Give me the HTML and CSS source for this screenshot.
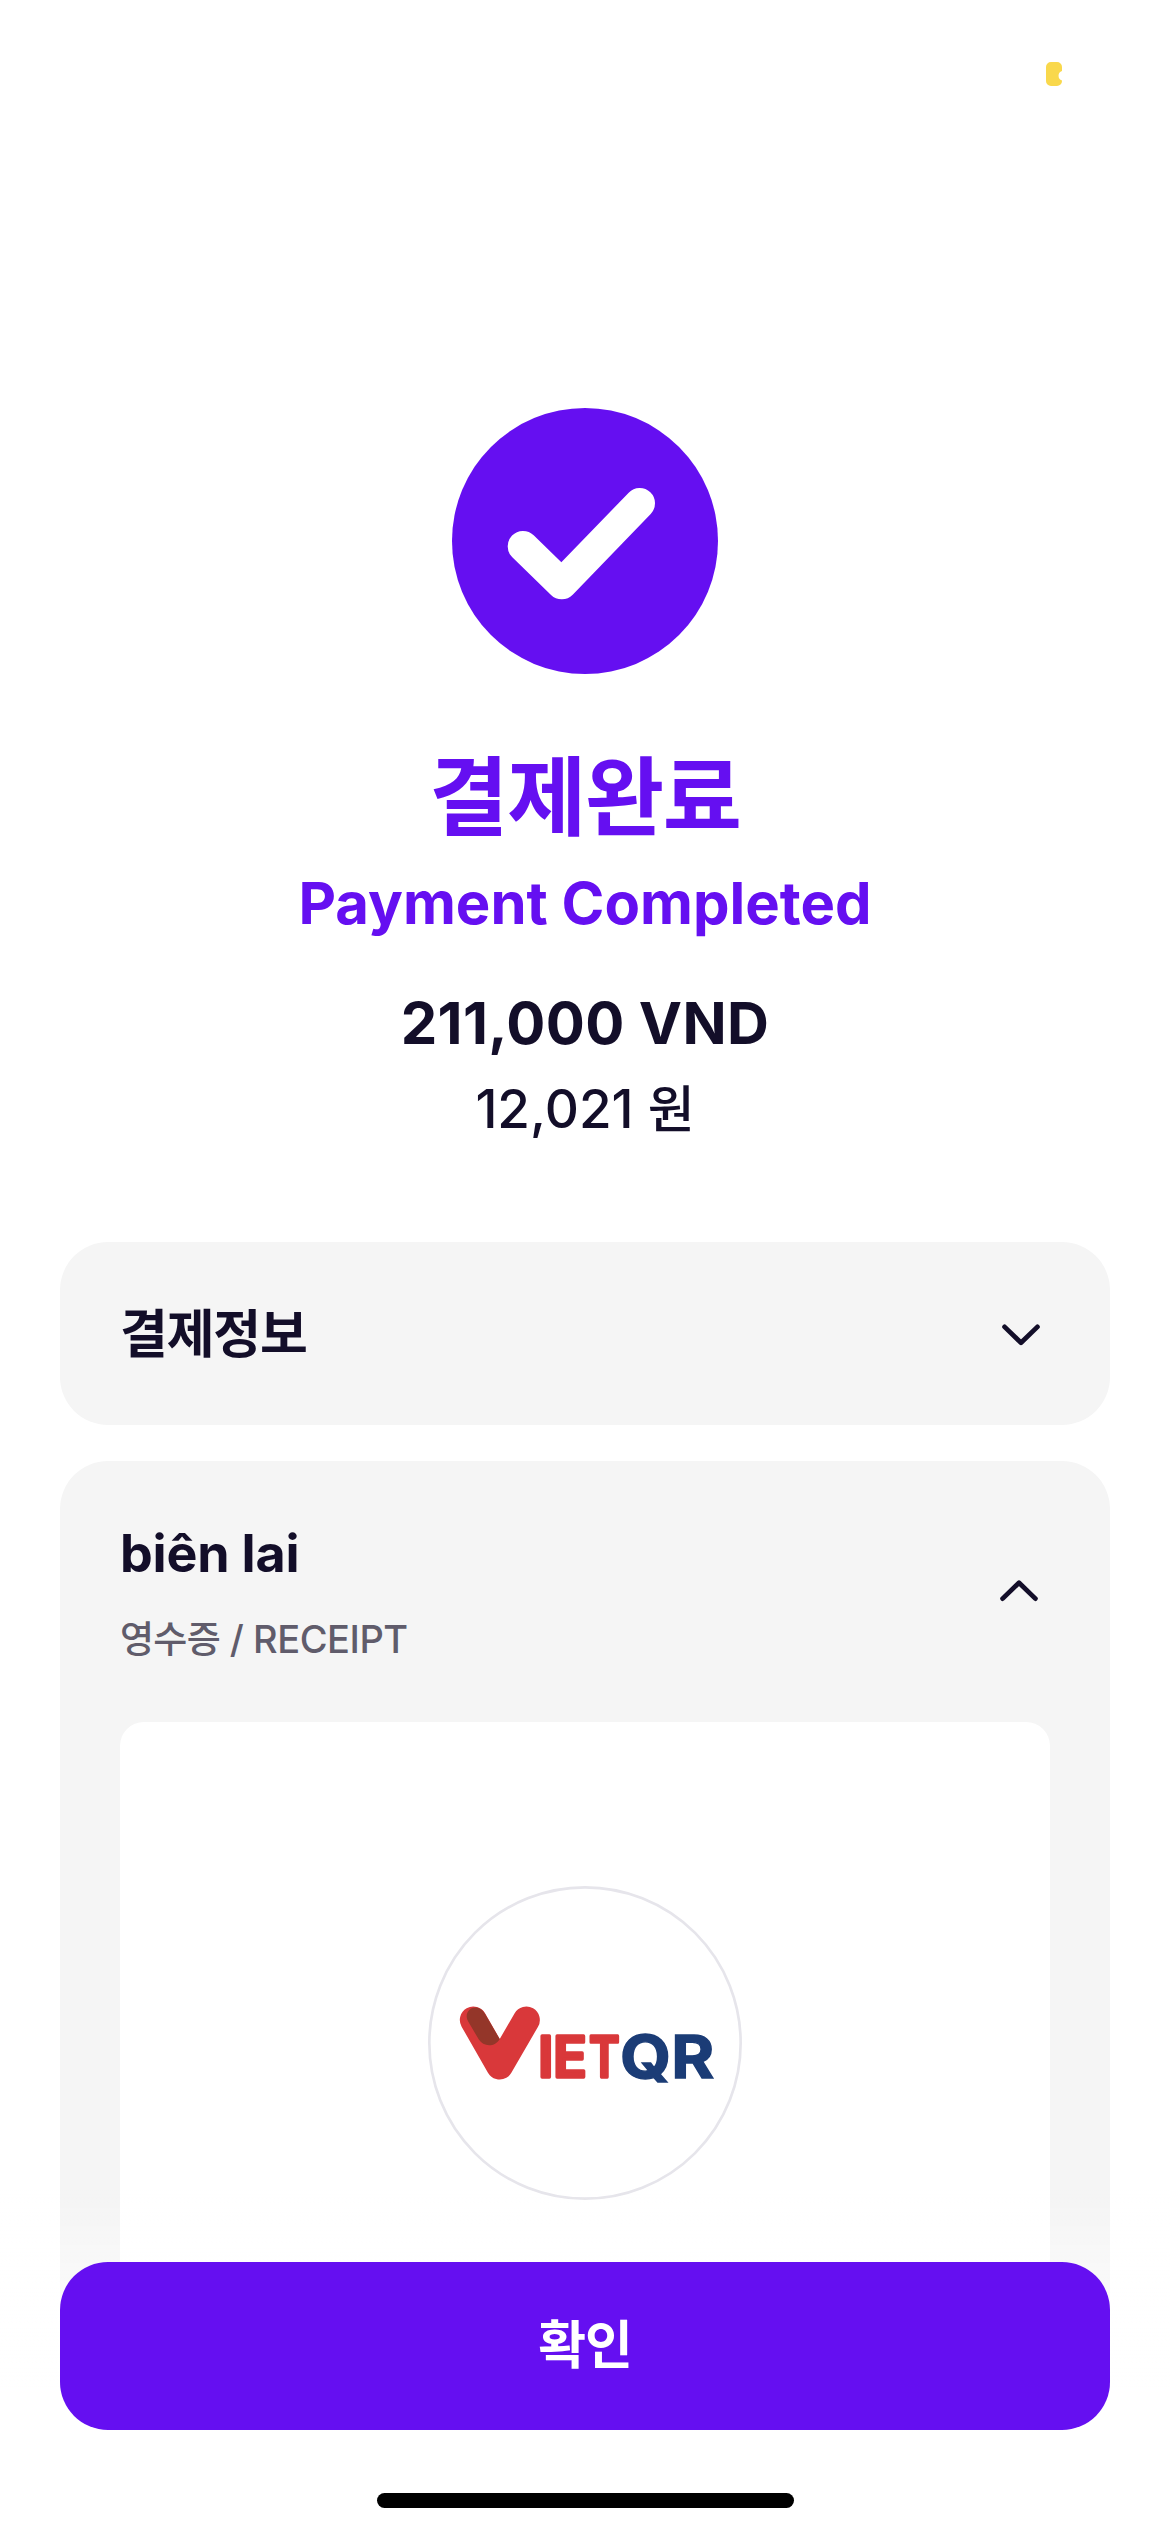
FILE: index.html
```html
<!DOCTYPE html>
<html lang="ko">
<head>
<meta charset="utf-8">
<title>결제완료</title>
<link rel="stylesheet" href="styles.css">
</head>
<body>
<header class="status">
  <svg class="battery" width="16" height="24" viewBox="0 0 16 24"><path fill="#f9d84c" d="M5 0H11A5 5 0 0 1 16 5V9A5 5 0 0 0 16 18.5V19A5 5 0 0 1 11 24H5A5 5 0 0 1 0 19V5A5 5 0 0 1 5 0Z"/></svg>
</header>
<main class="page">
  <section class="result">
    <svg class="check" width="266" height="266" viewBox="0 0 266 266">
      <circle cx="133" cy="133" r="133" fill="#650ff1"/>
      <path d="M71 138.3L109.7 176L187.7 95.3" fill="none" stroke="#fff" stroke-width="30.6" stroke-linecap="round" stroke-linejoin="round"/>
    </svg>
    <h1 class="title">결제완료</h1>
    <p class="subtitle">Payment Completed</p>
    <p class="amount">211,000 VND</p>
    <p class="converted">12,021 <span class="won">원</span></p>
  </section>
  <section class="card card-info">
    <h2 class="card-title-ko">결제정보</h2>
    <svg class="chevron" width="58" height="40" viewBox="0 0 58 40"><path d="M12.6 12.9L29 28.8L45.4 12.9"/></svg>
  </section>
  <section class="card card-receipt">
    <div class="card-head">
      <div>
        <h2 class="card-title">biên lai</h2>
        <p class="card-sub"><span class="sub-ko">영수증</span> / RECEIPT</p>
      </div>
      <svg class="chevron" width="58" height="40" viewBox="0 0 58 40"><path d="M10.6 25.6L27 9.7L43.4 25.6"/></svg>
    </div>
    <div class="receipt">
      <svg class="logo" width="314" height="314" viewBox="24 46 942 942">
        <circle cx="495" cy="517" r="467" fill="#fff" stroke="#e6e5eb" stroke-width="8"/>
        <path d="M160 448L239 586L319 448" fill="none" stroke="#d9383a" stroke-width="81" stroke-linecap="round" stroke-linejoin="round"/>
        <path d="M140 438C140 408 178 400 194 428L239 505C226 530 190 530 176 506L145 453Q140 445 140 438Z" fill="#943629"/>
        <text class="logo-iet" x="354 399" y="619">IE</text>
        <text class="logo-iet" x="507" y="619" textLength="92" lengthAdjust="spacingAndGlyphs">T</text>
        <text class="logo-qr" x="600" y="622" textLength="153" lengthAdjust="spacingAndGlyphs">Q</text>
        <text class="logo-qr" x="754" y="622" textLength="129" lengthAdjust="spacingAndGlyphs">R</text>
      </svg>
    </div>
  </section>
</main>
<footer class="footer">
  <button class="confirm">확인</button>
  <div class="home-bar"></div>
</footer>
</body>
</html>
```
FILE: styles.css
```css
* { box-sizing: border-box; margin: 0; padding: 0; }
body {
  height: 2532px;
  background: #fff;
  color: #130e29;
  font-family: "Inter", "Noto Sans CJK KR", sans-serif;
}
.status { height: 408px; padding: 62px 108px 0 0; display: flex; justify-content: flex-end; }
.page { padding: 0 60px; display: flex; flex-direction: column; }
.result { display: flex; flex-direction: column; align-items: center; margin-bottom: 101px; white-space: nowrap; }
.title { margin-top: 70px; font-size: 86px; line-height: 108px; font-weight: 700; letter-spacing: -1.3px; color: #650ff1; }
.subtitle { margin-top: 15px; font-size: 58px; line-height: 72px; font-weight: 700; color: #650ff1; }
.amount { margin-top: 48px; font-size: 58px; line-height: 72px; font-weight: 700; letter-spacing: 0.35px; }
.converted { margin-top: 18px; font-size: 53px; line-height: 64px; font-weight: 500; }
.won { font-size: 51px; line-height: 1; }
.card { background: #f5f5f5; border-radius: 48px; padding: 0 60px; }
.card-info { height: 183px; display: flex; align-items: center; justify-content: space-between; margin-bottom: 36px; }
.card-title-ko { padding-top: 2px; font-size: 52px; line-height: 64px; font-weight: 700; letter-spacing: -1.2px; }
.card-receipt { padding-top: 61px; }
.card-head { display: flex; align-items: center; justify-content: space-between; }
.card-title { font-size: 52px; line-height: 64px; font-weight: 700; letter-spacing: -0.2px; }
.card-sub { margin-top: 29px; font-size: 38px; line-height: 48px; font-weight: 450; letter-spacing: -0.45px; color: #605c6b; }
.sub-ko { font-size: 37px; line-height: 1; font-weight: 500; letter-spacing: -0.7px; }
.chevron path { fill: none; stroke: #130e29; stroke-width: 4.8; stroke-linecap: round; stroke-linejoin: round; }
.receipt { margin-top: 59px; height: 750px; padding-top: 164px; background: #fff; border-radius: 24px; display: flex; justify-content: center; align-items: flex-start; }
.logo-iet { font-family: "Inter", sans-serif; font-size: 168px; font-weight: 600; fill: #d9383a; stroke: #d9383a; stroke-width: 10; stroke-linejoin: round; }
.logo-qr { font-family: "Inter", sans-serif; font-size: 178px; font-weight: 700; fill: #1b3c76; stroke: #1b3c76; stroke-width: 4; }
.footer {
  position: fixed;
  left: 0;
  right: 0;
  bottom: 0;
  padding: 72px 60px 24px;
  display: flex;
  flex-direction: column;
  align-items: center;
  background: linear-gradient(to bottom, rgba(255,255,255,0), #fff 200px);
}
.confirm { width: 100%; height: 168px; margin-bottom: 63px; border: 0; border-radius: 48px; background: #650ff1; color: #fff; font: 700 52px/64px "Inter", "Noto Sans CJK KR", sans-serif; letter-spacing: -1px; }
.home-bar { width: 417px; height: 15px; border-radius: 8px; background: #000; }
```
